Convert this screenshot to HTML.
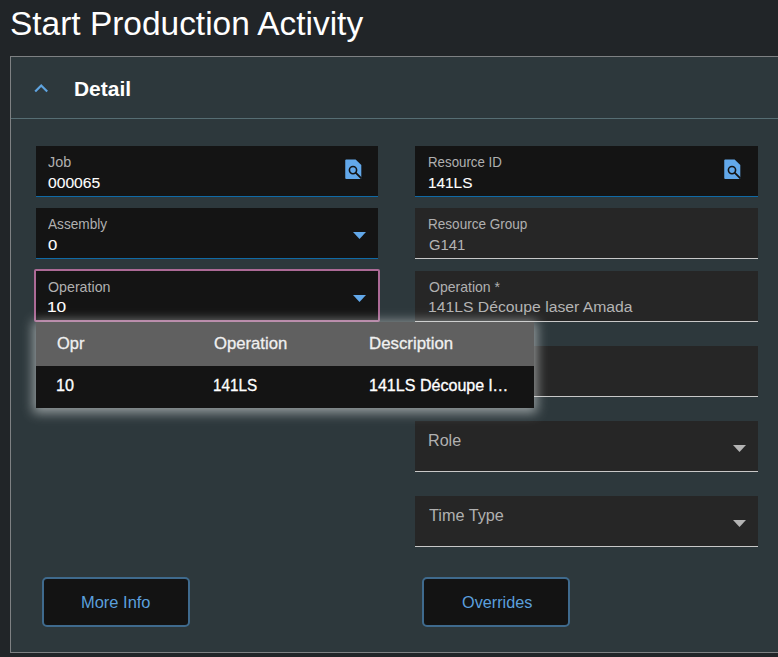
<!DOCTYPE html>
<html><head><meta charset="utf-8">
<style>
*{margin:0;padding:0;box-sizing:border-box}
html,body{width:778px;height:657px;overflow:hidden;background:#212528;font-family:"Liberation Sans",sans-serif;}
.a{position:absolute}
.t{position:absolute;white-space:nowrap;line-height:1;transform-origin:0 0}
#panel{left:10px;top:56px;width:800px;height:597px;background:#2d383c;border:1px solid #7e8183;}
#sep{left:11px;top:118px;width:780px;height:1px;background:#566d73}
.f{position:absolute;width:342px;height:51px;background:#141414;border-bottom:1px solid #106aa6}
.r{position:absolute;width:343px;height:51px;background:#262626;border-bottom:1px solid #c8c8c8}
.btn{position:absolute;width:148px;height:50px;background:#131313;border:2px solid #3f6a8d;border-radius:5px}
#pop{left:36px;top:322px;width:498px;height:86px;background:#141414;box-shadow:0 2px 11px 3px rgba(220,225,225,0.6)}
#ph{left:0;top:0;width:498px;height:44px;background:#606060}
</style></head><body>
<div class="a" id="panel"></div>
<div class="a" id="sep"></div>
<svg class="a" style="left:30px;top:80px" width="24" height="16"><polyline points="5.2,11.5 11.2,5.5 17.2,11.5" fill="none" stroke="#5fa4e0" stroke-width="2.2"/></svg>

<div class="f" style="left:36px;top:146px"></div>
<svg class="a" style="left:344px;top:159px" width="20" height="22" viewBox="0 0 20 22">
<path d="M2.25,0.5 H11.6 L17.3,6 V19.9 H2.25 Q1.25,19.9 1.25,18.9 V1.5 Q1.25,0.5 2.25,0.5 Z" fill="#62a8ea"/>
<circle cx="9" cy="11.1" r="3.6" fill="none" stroke="#141414" stroke-width="1.6"/>
<line x1="11.6" y1="13.7" x2="17.6" y2="19.7" stroke="#141414" stroke-width="1.8"/>
</svg>
<div class="f" style="left:36px;top:208px"></div>
<svg class="a" style="left:352px;top:231px" width="15" height="9"><polygon points="1,1 14,1 7.5,8" fill="#62a8ea"/></svg>
<div class="a" style="left:34px;top:269px;width:346px;height:53px;background:#141414;border:2px solid #ac6a96;border-radius:2px"></div>
<svg class="a" style="left:352px;top:294px" width="15" height="9"><polygon points="1,1 14,1 7.5,8" fill="#62a8ea"/></svg>

<div class="f" style="left:415px;top:146px;width:343px"></div>
<svg class="a" style="left:723px;top:159px" width="20" height="22" viewBox="0 0 20 22">
<path d="M2.25,0.5 H11.6 L17.3,6 V19.9 H2.25 Q1.25,19.9 1.25,18.9 V1.5 Q1.25,0.5 2.25,0.5 Z" fill="#62a8ea"/>
<circle cx="9" cy="11.1" r="3.6" fill="none" stroke="#141414" stroke-width="1.6"/>
<line x1="11.6" y1="13.7" x2="17.6" y2="19.7" stroke="#141414" stroke-width="1.8"/>
</svg>
<div class="r" style="left:415px;top:208px"></div>
<div class="r" style="left:415px;top:271px"></div>
<div class="r" style="left:415px;top:346px"></div>
<div class="r" style="left:415px;top:421px"></div>
<svg class="a" style="left:732px;top:444px" width="15" height="9"><polygon points="1,1 14,1 7.5,8" fill="#b4b4b4"/></svg>
<div class="r" style="left:415px;top:496px"></div>
<svg class="a" style="left:732px;top:519px" width="15" height="9"><polygon points="1,1 14,1 7.5,8" fill="#b4b4b4"/></svg>

<div class="btn" style="left:42px;top:577px"></div>
<div class="btn" style="left:422px;top:577px"></div>

<div class="a" id="pop"><div class="a" id="ph"></div></div>
<div class="t" style="left:9.77px;top:7.70px;font-size:32.5px;color:#ffffff;transform:scaleX(1.0289);">Start Production Activity</div>
<div class="t" style="left:74.20px;top:77.50px;font-size:21px;color:#ffffff;font-weight:bold;transform:scaleX(0.9973);">Detail</div>
<div class="t" style="left:48.30px;top:155.00px;font-size:14.5px;color:#b0b0b0;transform:scaleX(0.9908);">Job</div>
<div class="t" style="left:48.00px;top:174.80px;font-size:15.3px;color:#ffffff;transform:scaleX(1.0230);-webkit-text-stroke:0.1px currentColor;">000065</div>
<div class="t" style="left:48.00px;top:217.00px;font-size:14.5px;color:#b0b0b0;transform:scaleX(0.9403);">Assembly</div>
<div class="t" style="left:48.00px;top:236.80px;font-size:15.3px;color:#ffffff;transform:scaleX(1.0875);-webkit-text-stroke:0.1px currentColor;">0</div>
<div class="t" style="left:48.00px;top:280.00px;font-size:14.5px;color:#b0b0b0;transform:scaleX(0.9809);">Operation</div>
<div class="t" style="left:46.87px;top:298.80px;font-size:15.3px;color:#ffffff;transform:scaleX(1.1285);-webkit-text-stroke:0.1px currentColor;">10</div>
<div class="t" style="left:427.58px;top:155.00px;font-size:14.5px;color:#b0b0b0;transform:scaleX(0.9164);">Resource ID</div>
<div class="t" style="left:427.50px;top:174.80px;font-size:15.3px;color:#ffffff;transform:scaleX(1.0040);-webkit-text-stroke:0.1px currentColor;">141LS</div>
<div class="t" style="left:427.67px;top:217.00px;font-size:14.5px;color:#b0b0b0;transform:scaleX(0.9343);">Resource Group</div>
<div class="t" style="left:428.60px;top:236.80px;font-size:15.3px;color:#b4b4b4;transform:scaleX(0.9698);">G141</div>
<div class="t" style="left:428.60px;top:280.00px;font-size:14.5px;color:#b0b0b0;transform:scaleX(0.9673);">Operation *</div>
<div class="t" style="left:427.57px;top:298.80px;font-size:15.3px;color:#b4b4b4;transform:scaleX(1.0279);">141LS Découpe laser Amada</div>
<div class="t" style="left:427.75px;top:431.90px;font-size:17px;color:#b0b0b0;transform:scaleX(0.9490);">Role</div>
<div class="t" style="left:428.70px;top:507.00px;font-size:17px;color:#b0b0b0;transform:scaleX(0.9544);">Time Type</div>
<div class="t" style="left:81.13px;top:593.90px;font-size:17px;color:#5b9fdc;transform:scaleX(0.9679);">More Info</div>
<div class="t" style="left:461.70px;top:593.90px;font-size:17px;color:#5b9fdc;transform:scaleX(0.9551);">Overrides</div>
<div class="t" style="left:56.90px;top:335.20px;font-size:17px;color:#f0f0f0;transform:scaleX(0.9659);-webkit-text-stroke:0.3px currentColor;">Opr</div>
<div class="t" style="left:213.60px;top:335.20px;font-size:17px;color:#f0f0f0;transform:scaleX(0.9811);-webkit-text-stroke:0.3px currentColor;">Operation</div>
<div class="t" style="left:369.01px;top:335.20px;font-size:17px;color:#f0f0f0;transform:scaleX(0.9895);-webkit-text-stroke:0.3px currentColor;">Description</div>
<div class="t" style="left:55.96px;top:377.90px;font-size:15.6px;color:#ffffff;transform:scaleX(1.0376);-webkit-text-stroke:0.3px currentColor;">10</div>
<div class="t" style="left:212.62px;top:377.90px;font-size:15.6px;color:#ffffff;transform:scaleX(0.9796);-webkit-text-stroke:0.3px currentColor;">141LS</div>
<div class="t" style="left:368.97px;top:377.90px;font-size:15.6px;color:#ffffff;transform:scaleX(1.0298);-webkit-text-stroke:0.3px currentColor;">141LS Découpe l…</div>
</body></html>
